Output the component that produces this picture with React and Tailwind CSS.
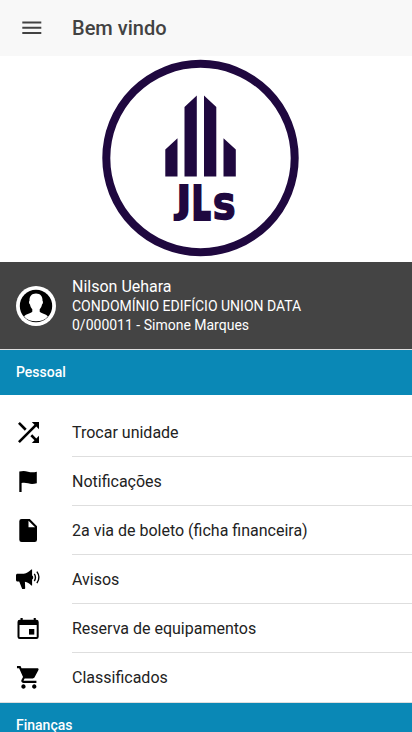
function ShuffleIcon() {
  return (
    <path
      transform="translate(-1.25 -1.25) scale(1.3125)"
      d="M10.59 9.17L5.41 4 4 5.41l5.17 5.17 1.42-1.41zM14.5 4l2.04 2.04L4 18.59 5.41 20 17.96 7.46 20 9.5V4h-5.5zm.33 9.41l-1.41 1.41 3.13 3.13L14.5 20H20v-5.5l-2.04 2.04-3.13-3.13z"
    />
  )
}

function FlagIcon() {
  return <path d="M5.3 4.6C9 3.7 11.2 3.9 14 4.8c3 .7 5.500.7 8.800 0v11.400c-3.300.9-5.800 1-8.800.1-2.300-.6-4.200-.8-6.400-.3v9H5.300z" />
}

function DocumentIcon() {
  return <path fillRule="evenodd" d="M7.600 3h8.200l7.200 7.200v13.500a2.300 2.300 0 0 1-2.300 2.300H7.600a2.300 2.300 0 0 1-2.300-2.300V5.300A2.300 2.300 0 0 1 7.600 3zM14.500 4.700v6.600h6.600z" />
}

function MegaphoneIcon() {
  return (
    <>
      <path d="M2 10.300c0-1 .6-1.600 1.600-1.600h6.200c3-.5 5.200-2 7.500-4.200h.8v5.900c1.500.3 1.500 3.700 0 4v6h-.8c-2-1.900-3.900-3-6.400-3.600l.3 6.400c0 .5-.3.800-.8.8H8.200L5.200 16.600H3.600c-1 0-1.600-.6-1.600-1.500z" />
      <path d="M20.300 8.800c1.400 2.200 1.400 5 0 7.200M22.900 6.700c2.500 3.500 2.500 8 0 11.500" fill="none" stroke="currentColor" strokeWidth="1.400" />
    </>
  )
}

function CalendarIcon() {
  return (
    <>
      <path fillRule="evenodd" d="M6.500 4h2.200v1.700h11V4h2.100v1.700h.7a2.200 2.200 0 0 1 2.200 2.200v14.900a2.200 2.200 0 0 1-2.200 2.200H5.700a2.200 2.200 0 0 1-2.200-2.200V7.900a2.200 2.200 0 0 1 2.200-2.200h.8zM5.500 11v12h17.200V11z" />
      <path d="M15 15h5.300v5.600H15z" />
    </>
  )
}

function CartIcon() {
  return (
    <path
      transform="translate(1.9 .8) scale(1.08 1.13)"
      d="M7 18c-1.100 0-1.990.9-1.990 2S5.900 22 7 22s2-.9 2-2-.9-2-2-2zM1 2v2h2l3.600 7.590-1.350 2.450c-.16.280-.250.610-.250.960 0 1.100.9 2 2 2h12v-2H7.420c-.140 0-.250-.110-.250-.250l.030-.120.900-1.630h7.450c.750 0 1.410-.410 1.750-1.030l3.580-6.490c.080-.140.120-.310.120-.480 0-.550-.450-1-1-1H5.210l-.940-2H1zm16 16c-1.100 0-1.990.9-1.990 2s.890 2 1.990 2 2-.9 2-2-.9-2-2-2z"
    />
  )
}

const items = [
  { label: 'Trocar unidade', Icon: ShuffleIcon },
  { label: 'Notificações', Icon: FlagIcon },
  { label: '2a via de boleto (ficha financeira)', Icon: DocumentIcon },
  { label: 'Avisos', Icon: MegaphoneIcon },
  { label: 'Reserva de equipamentos', Icon: CalendarIcon },
  { label: 'Classificados', Icon: CartIcon },
]

function Logo() {
  return (
    <svg width="206" height="206" viewBox="0 0 206 206" fill="#1f083f" className="block">
      <circle cx="103.500" cy="102" r="94.200" fill="none" stroke="#1f083f" strokeWidth="8" />
      <path d="M68.300 120.500V93.500L80.500 82.300V120.500zM87.500 120.500V51L99.800 39.500V120.500zM107 39.500L119.300 51V120.500H107zM126.500 82.300L138.800 93.500V120.500H126.500z" />
      <g fontFamily="DejaVu Sans, sans-serif" fontWeight="700" stroke="#1f083f">
        <text x="79.700" y="155.900" fontSize="38" strokeWidth="2">J</text>
        <text transform="translate(95.300 162.500) scale(.63 1)" fontSize="45" strokeWidth="4">L</text>
        <text transform="translate(115.800 163.300) scale(.82 1)" fontSize="47" strokeWidth="1.500">s</text>
      </g>
    </svg>
  )
}

function Avatar() {
  return (
    <svg width="40" height="40" viewBox="0 0 40 40" className="shrink-0">
      <circle cx="20" cy="20" r="20" fill="#fff" />
      <circle cx="20" cy="20" r="16.200" fill="#000" />
      <path
        fill="#fff"
        d="M20 7.500c4.300 0 6.700 2.800 6.500 7.200.8.500.6 3-.5 3.800-.4 2.200-1.200 3.600-2.300 4.700v2.600c1.200 1.800 6.300 2 8.200 4.700C29 34 25 35.300 20 35.300S11 34 8.100 30.500c1.900-2.700 7-2.900 8.200-4.700v-2.600c-1.100-1.100-1.900-2.500-2.300-4.700-1.100-.8-1.300-3.300-.5-3.800C13.300 10.300 15.700 7.500 20 7.500z"
      />
    </svg>
  )
}

function SectionHeader({ children }) {
  return (
    <div className="flex h-[46px] shrink-0 items-center border-t border-[#dedede] bg-[#0a88b6] px-4 pb-0.5 text-sm font-medium text-white">
      {children}
    </div>
  )
}

export default function App() {
  return (
    <div className="flex h-screen flex-col overflow-hidden bg-white font-['Roboto',sans-serif]">
      <header className="flex h-14 shrink-0 items-center bg-[#f8f8f8] text-[#424242]">
        <svg width="20" height="14" viewBox="0 0 20 14" fill="currentColor" className="ml-[22px] mr-[30px]">
          <path d="M.3 0.500h19v2H.3zM.3 5.700h19v2H.3zM.3 11h19v2H.3z" />
        </svg>
        <h1 className="text-xl font-medium">Bem vindo</h1>
      </header>

      <div className="flex h-[206px] shrink-0 justify-center pr-[12px]">
        <Logo />
      </div>

      <div className="flex h-[87px] shrink-0 items-center gap-4 bg-[#444] px-4 text-white">
        <Avatar />
        <div>
          <h2 className="text-base leading-5">Nilson Uehara</h2>
          <p className="text-sm leading-[19px]">CONDOMÍNIO EDIFÍCIO UNION DATA</p>
          <p className="text-sm leading-[19px]">0/000011 - Simone Marques</p>
        </div>
      </div>

      <SectionHeader>Pessoal</SectionHeader>
      <ul className="shrink-0 pt-[13px]">
        {items.map(({ label, Icon }, i) => (
          <li key={label} className="flex h-[49px] items-center pl-3.5">
            <svg width="28" height="28" viewBox="0 0 28 28" fill="currentColor" className="mb-px mr-[30px] shrink-0 text-black">
              <Icon />
            </svg>
            <span
              className={`flex h-full flex-1 items-center text-base text-[#222] ${
                i < items.length - 1 ? 'border-b border-[#dedede] pt-0.5' : 'pt-px'
              }`}
            >
              {label}
            </span>
          </li>
        ))}
      </ul>
      <SectionHeader>Finanças</SectionHeader>
    </div>
  )
}
